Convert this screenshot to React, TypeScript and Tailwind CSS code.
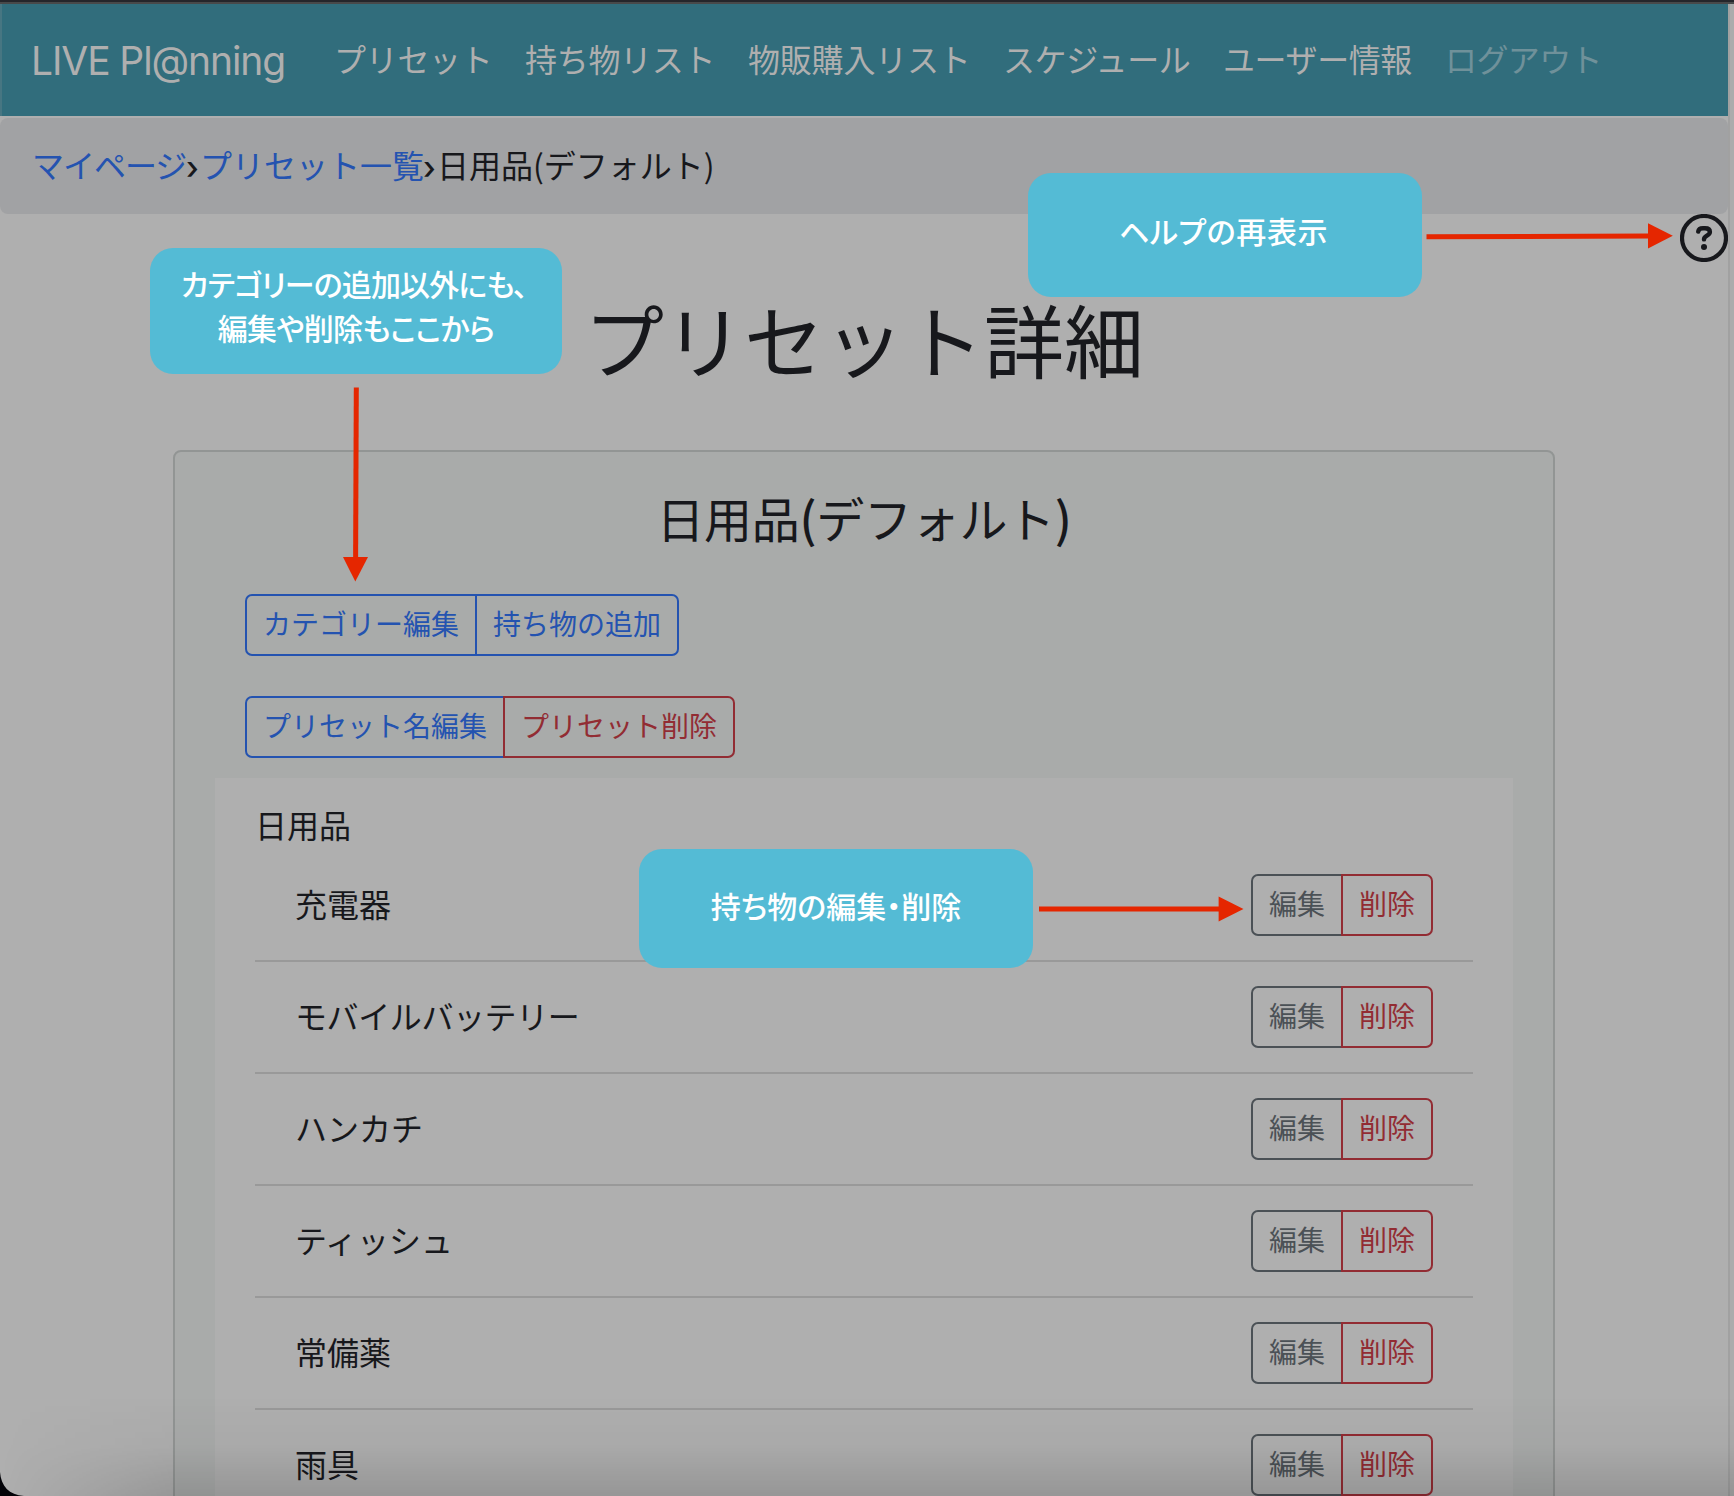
import React from "react";

const navItems = [
  { label: "プリセット", cls: "tracking-[-0.3px] w-[191px]" },
  { label: "持ち物リスト", cls: "tracking-[-0.3px] w-[223px]" },
  { label: "物販購入リスト", cls: "tracking-[-0.2px] w-[255px]" },
  { label: "スケジュール", cls: "tracking-[-0.4px] w-[220px]" },
  { label: "ユーザー情報", cls: "tracking-[-0.4px] w-[222px]" },
];

const items = [
  { name: "充電器", cls: "" },
  { name: "モバイルバッテリー", cls: "tracking-[-0.4px]" },
  { name: "ハンカチ", cls: "" },
  { name: "ティッシュ", cls: "" },
  { name: "常備薬", cls: "" },
  { name: "雨具", cls: "" },
];

const tones = {
  blue: "border-[#2453b0] text-[#2453b0]",
  red: "border-[#922c33] text-[#922c33]",
  gray: "border-[#4b5156] text-[#4b5156]",
};

type Tone = keyof typeof tones;

function ButtonGroup({ buttons }: { buttons: { label: string; tone: Tone }[] }) {
  return (
    <div className="flex h-[62px]">
      {buttons.map((b, i) => (
        <button
          key={b.label}
          className={`${tones[b.tone]} ${i === 0 ? "rounded-l-[7px]" : "relative -ml-[2px] rounded-r-[7px]"} border-2 px-4 pb-[4px] text-[28px] leading-[42px] whitespace-nowrap`}
        >
          {b.label}
        </button>
      ))}
    </div>
  );
}

function Callout({ className, children }: { className: string; children: React.ReactNode }) {
  return (
    <div
      className={`${className} absolute z-20 flex flex-col items-center rounded-[23px] bg-[#54bbd5] text-[30px] leading-[44px] font-medium whitespace-nowrap text-white [font-feature-settings:'palt']`}
    >
      {children}
    </div>
  );
}

function Separator() {
  return <span className="w-[14px] pt-[3px] font-['Inter',sans-serif] font-medium">›</span>;
}

export default function App() {
  return (
    <div className="relative h-[1496px] w-[1734px] overflow-hidden bg-[#afafaf] font-['Noto_Sans_CJK_JP',sans-serif] text-[32px] leading-[48px] text-[#17181c]">
      <div className="h-[4px] border-b-2 border-[#48494a] bg-[#25262b]" />
      <div className="flex">
        <div className="w-[1728px]">
          <nav className="flex h-[112px] items-center border-l-2 border-[#477682] bg-[#316d7c] pl-[29px] text-[#afafaf]">
            <span className="w-[303px] pt-[2px] font-['Inter',sans-serif] text-[39px] tracking-[-1.1px] whitespace-nowrap">
              LIVE Pl@nning
            </span>
            {navItems.map((n) => (
              <a key={n.label} className={`${n.cls} shrink-0 pb-[5px] whitespace-nowrap`}>
                {n.label}
              </a>
            ))}
            <a className="pb-[5px] tracking-[-0.6px] whitespace-nowrap text-[#6f919a]">ログアウト</a>
          </nav>

          <div className="mt-[2px] flex h-[96px] items-center rounded-lg bg-[#a1a2a4] pl-8 whitespace-nowrap">
            <a className="w-[154px] pb-1 tracking-[-1px] text-[#2453b0]">マイページ</a>
            <Separator />
            <a className="w-[223px] pb-1 text-[#2453b0]">プリセット一覧</a>
            <Separator />
            <span className="pb-1">日用品(デフォルト)</span>
          </div>

          <h1 className="flex h-[236px] items-center justify-center pt-[10px] text-[80px] leading-[96px]">
            プリセット詳細
          </h1>

          <main className="mx-auto h-[1200px] w-[1382px] rounded-lg border-2 border-[#929594] bg-[#a9abaa] px-10">
            <h2 className="flex h-[142px] items-center justify-center pb-[12px] text-[48px] leading-[58px] tracking-[-0.3px]">
              日用品<span className="font-medium">(</span>デフォルト<span className="font-medium">)</span>
            </h2>
            <div className="flex flex-col gap-10 pl-[30px]">
              <ButtonGroup
                buttons={[
                  { label: "カテゴリー編集", tone: "blue" },
                  { label: "持ち物の追加", tone: "blue" },
                ]}
              />
              <ButtonGroup
                buttons={[
                  { label: "プリセット名編集", tone: "blue" },
                  { label: "プリセット削除", tone: "red" },
                ]}
              />
            </div>
            <section className="mt-5 h-[900px] bg-[#afafaf] px-10 pt-[22px]">
              <h3 className="mb-[2px]">日用品</h3>
              <ul>
                {items.map(({ name, cls }) => (
                  <li
                    key={name}
                    className="flex h-[112px] items-center justify-between border-b-2 border-[#999999] px-10"
                  >
                    <span className={`${cls} pb-[4px]`}>{name}</span>
                    <ButtonGroup
                      buttons={[
                        { label: "編集", tone: "gray" },
                        { label: "削除", tone: "red" },
                      ]}
                    />
                  </li>
                ))}
              </ul>
            </section>
          </main>
        </div>
        <div className="w-[6px] border-l-2 border-[#a1a1a1] bg-[#acacac]" />
      </div>

      <div className="absolute bottom-0 left-0 h-[100px] w-full bg-linear-to-b from-black/0 via-black/3 to-black/14 [mask-image:linear-gradient(to_right,transparent,black_180px)]" />
      <svg className="absolute bottom-0 left-0" width="24" height="24">
        <path d="M0 0C1 14 9 23 24 24H0Z" fill="#030308" />
      </svg>

      <svg className="absolute top-[214px] left-[1680px]" width="48" height="48" viewBox="0 0 48 48" fill="none" stroke="#17181c">
        <circle cx="24" cy="24" r="22" strokeWidth="4.2" />
        <path d="M18.2 17.6C18.6 15 20.5 14.3 23 14.3H25C28.2 14.3 29.9 15.6 29.9 18C29.9 21.8 24 21.6 24 25.4" strokeWidth="4.4" strokeLinecap="round" />
        <circle cx="24" cy="33" r="3" fill="#17181c" stroke="none" />
      </svg>

      <Callout className="top-[248px] left-[150px] h-[126px] w-[412px] pt-[13px]">
        <span className="mr-1 tracking-[-0.85px]">カテゴリーの追加以外にも、</span>
        <span className="tracking-[-0.7px]">編集や削除もここから</span>
      </Callout>
      <Callout className="top-[173px] left-[1028px] h-[124px] w-[394px] pt-[35px]">
        <span className="mr-[3px] tracking-[0.6px]">ヘルプの再表示</span>
      </Callout>
      <Callout className="top-[849px] left-[639px] h-[119px] w-[394px] pt-[34px]">
        <span>持ち物の編集・削除</span>
      </Callout>

      <svg className="absolute inset-0" width="1734" height="1496" fill="#e52600" stroke="#e52600" strokeWidth="5">
        <path d="M356.3 387.5L355.6 560" />
        <path d="M343 557H368L355.3 581.5Z" stroke="none" />
        <path d="M1426.5 236.8L1650 235.9" />
        <path d="M1648 223.3V248.5L1672.8 235.8Z" stroke="none" />
        <path d="M1039 909H1221" />
        <path d="M1218.6 896.5V921.5L1243.5 909Z" stroke="none" />
      </svg>
    </div>
  );
}
